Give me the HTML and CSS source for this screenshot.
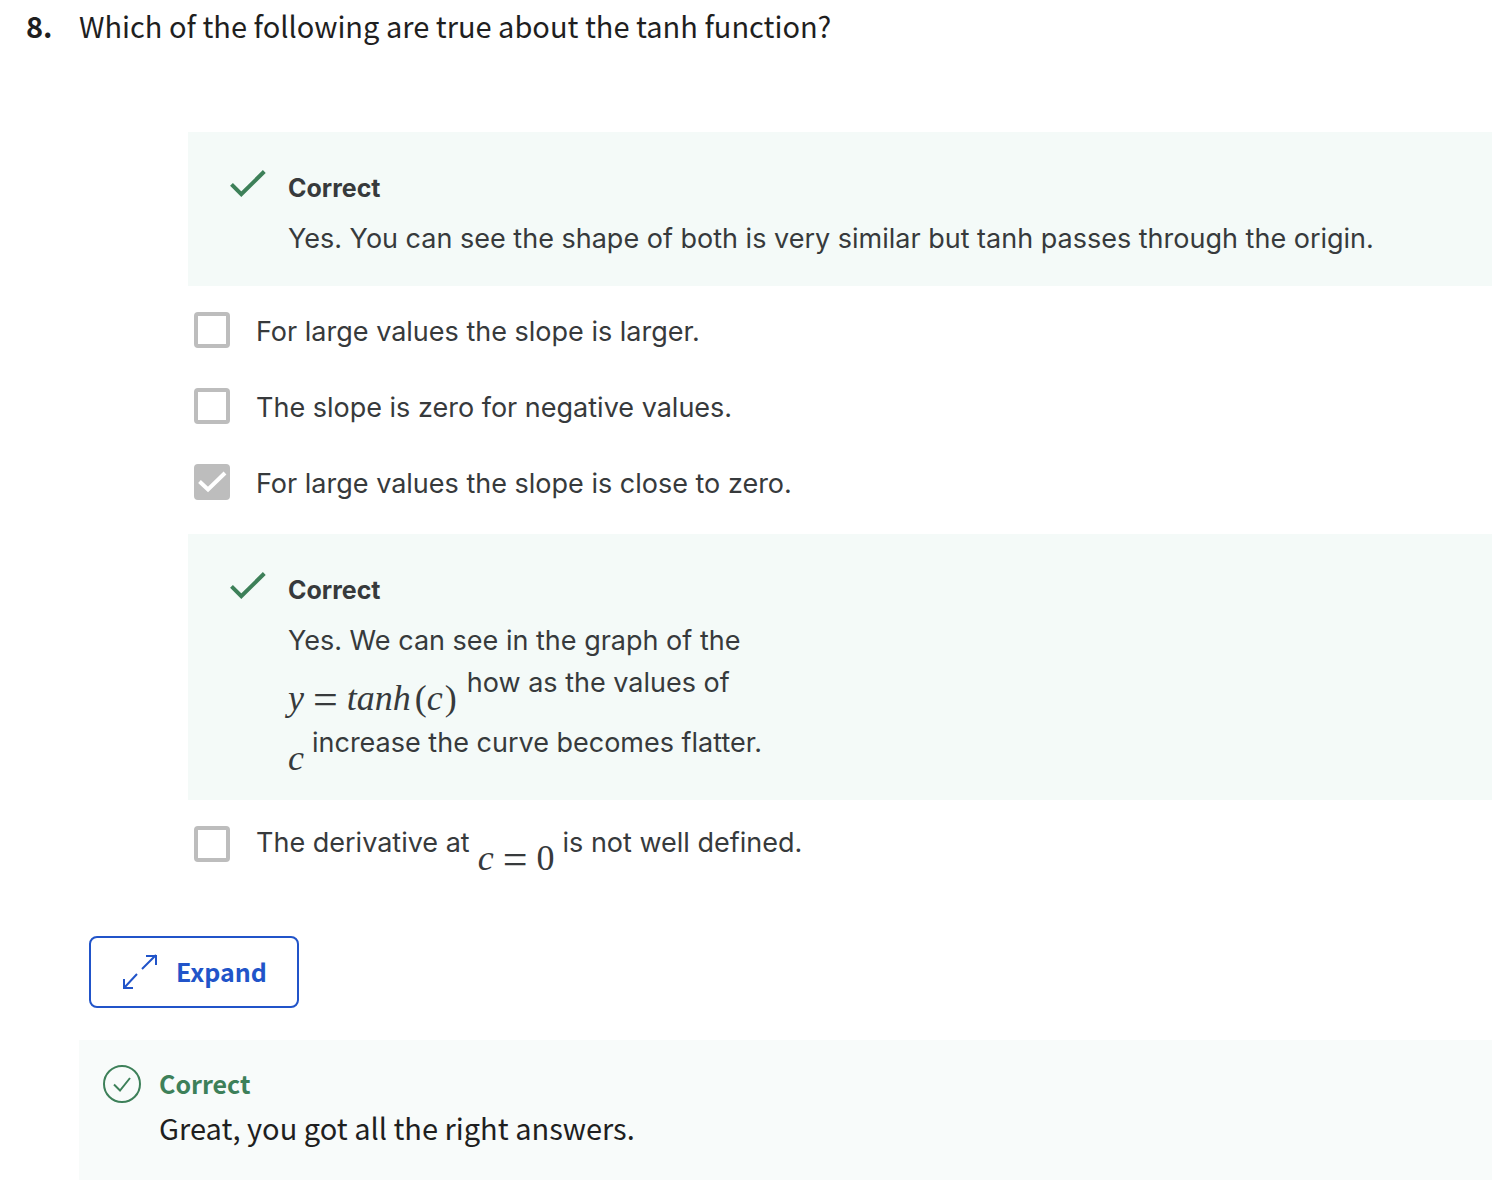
FILE: index.html
```html
<!DOCTYPE html>
<html lang="en">
<head>
<meta charset="utf-8">
<meta name="viewport" content="width=device-width, initial-scale=1">
<title>Quiz question 8</title>
<link rel="stylesheet" href="styles.css">
</head>
<body>
<main class="question">
  <h1 class="prompt"><span class="prompt-number">8.</span><span>Which of the following are true about the tanh function?</span></h1>

  <div class="answers">
    <section class="feedback">
      <svg class="feedback-icon" viewBox="0 0 36 28" aria-hidden="true"><path d="M1.5 14.3 11.3 24.2 34.3 1.5"/></svg>
      <div>
        <h2 class="feedback-title">Correct</h2>
        <p class="line">Yes. You can see the shape of both is very similar but tanh passes through the origin.</p>
      </div>
    </section>

    <div class="options">
      <label class="option">
        <span class="tick"><input type="checkbox"></span>
        <span class="option-text">For large values the slope is larger.</span>
      </label>
      <label class="option">
        <span class="tick"><input type="checkbox"></span>
        <span class="option-text">The slope is zero for negative values.</span>
      </label>
      <label class="option">
        <span class="tick"><input type="checkbox" checked><svg viewBox="0 0 36 36" aria-hidden="true"><path d="M5.5 17.5 14 25.5 31 9"/></svg></span>
        <span class="option-text">For large values the slope is close to zero.</span>
      </label>
    </div>

    <section class="feedback">
      <svg class="feedback-icon" viewBox="0 0 36 28" aria-hidden="true"><path d="M1.5 14.3 11.3 24.2 34.3 1.5"/></svg>
      <div>
        <h2 class="feedback-title">Correct</h2>
        <p class="line">Yes. We can see in the graph of the</p>
        <p class="line line-math"><span class="math"><i>y</i><span class="rel">=</span><i class="fn">tanh</i>(<i>c</i><span class="close">)</span></span><span>how as the values of</span></p>
        <p class="line line-math"><span class="math"><i>c</i></span><span>increase the curve becomes flatter.</span></p>
      </div>
    </section>

    <div class="options">
      <label class="option">
        <span class="tick"><input type="checkbox"></span>
        <span class="line-math"><span>The derivative at</span><span class="math"><i>c</i><span class="rel">=</span>0</span><span>is not well defined.</span></span>
      </label>
    </div>
  </div>

  <div class="footer">
    <button class="expand" type="button">
      <svg viewBox="0 0 36 36" aria-hidden="true"><path d="M20 15 34 1M24 2H34V11M15 20 2 34M2 25V34H11"/></svg>
      Expand
    </button>
    <section class="result">
      <svg class="result-icon" viewBox="0 0 38 38" aria-hidden="true"><circle cx="19" cy="19" r="18"/><path d="M11 19.5 17 25.5 27 13"/></svg>
      <div>
        <h2 class="result-title">Correct</h2>
        <p class="result-text">Great, you got all the right answers.</p>
      </div>
    </section>
  </div>
</main>
</body>
</html>
```
FILE: styles.css
```css
* {
  box-sizing: border-box;
}

body {
  margin: 0;
  background: #fff;
  color: #373a3c;
  font: 27px/42px Inter, "Liberation Sans", sans-serif;
}

h1,
h2,
p {
  margin: 0;
}

svg {
  display: block;
  fill: none;
}

.prompt,
.expand,
.result {
  font-family: "Noto Sans CJK SC", "Noto Sans", sans-serif;
}

.prompt {
  display: flex;
  padding: 4px 0 0 26px;
  color: #1f1f1f;
  font-size: 29px;
  font-weight: 400;
}

.prompt-number {
  flex: none;
  width: 53px;
  font-weight: 700;
}

.answers {
  padding: 86px 0 0 188px;
}

.feedback {
  display: flex;
  gap: 22px;
  padding: 34px 24px 26px 42px;
  background: #f4faf8;
}

.feedback-icon {
  flex: none;
  width: 36px;
  height: 28px;
  margin-top: 4px;
  stroke: #3d8059;
  stroke-width: 4;
}

.feedback-title {
  margin-bottom: 8px;
  font-size: 25px;
  line-height: 44px;
}

.line-math {
  display: flex;
  align-items: flex-start;
  gap: 8px;
}

.line.line-math {
  height: 60px;
}

.line.line-math:last-child {
  height: 52px;
}

.math {
  padding-top: 15px;
  font-family: "Liberation Serif", serif;
  font-size: 36px;
  white-space: nowrap;
}

.rel {
  margin: 0 9px;
  font-size: 44px;
  line-height: 0;
  vertical-align: -4px;
}

.fn {
  margin-right: 4px;
}

.close {
  margin: 0 2px;
}

.options {
  padding: 6px 0 14px 6px;
}

.option {
  display: flex;
  align-items: center;
  gap: 26px;
  height: 76px;
}

.option-text {
  padding-top: 4px;
}

.option .line-math {
  height: 44px;
}

.tick {
  display: grid;
  flex: none;
  width: 36px;
  height: 36px;
}

.tick > * {
  grid-area: 1 / 1;
}

.tick input {
  width: 36px;
  height: 36px;
  margin: 0;
  appearance: none;
  border: 4px solid #bdbdbd;
  border-radius: 4px;
  background: #fff;
}

.tick input:checked {
  background: #bdbdbd;
}

.tick svg {
  z-index: 1;
  stroke: #fff;
  stroke-width: 4;
  pointer-events: none;
}

.footer {
  padding: 40px 0 0 79px;
}

.expand {
  display: flex;
  align-items: center;
  gap: 18px;
  height: 72px;
  margin: 0 0 32px 10px;
  padding: 0 30px 2px 31px;
  border: 2px solid #2154c9;
  border-radius: 8px;
  background: #fff;
  color: #2154c9;
  font-size: 25px;
  font-weight: 700;
}

.expand svg {
  width: 36px;
  height: 36px;
  margin-top: 2px;
  stroke: currentColor;
  stroke-width: 2;
}

.result {
  display: flex;
  gap: 18px;
  min-height: 140px;
  padding: 22px 24px;
  background: #f8fbfa;
}

.result-icon {
  flex: none;
  width: 38px;
  height: 38px;
  margin-top: 3px;
  stroke: #3d8059;
  stroke-width: 2;
}

.result-title {
  color: #3d8059;
  font-size: 25px;
  line-height: 42px;
}

.result-text {
  color: #1f1f1f;
  font-size: 29px;
  line-height: 46px;
}
```
